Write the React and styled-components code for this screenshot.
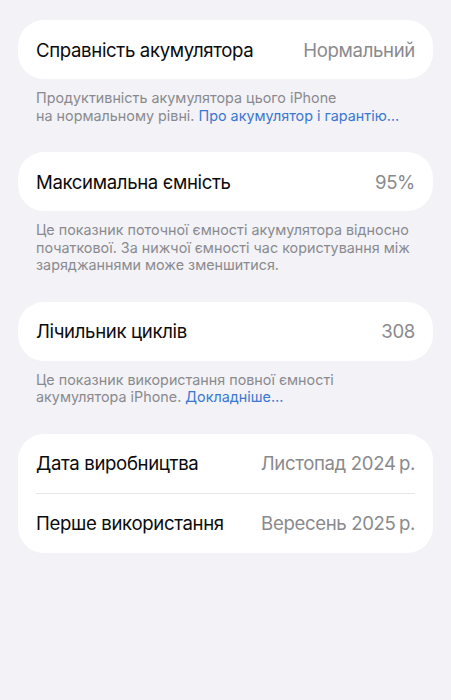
import styled, { createGlobalStyle } from "styled-components";

const GlobalStyle = createGlobalStyle`
    html, body {
        margin: 0;
        padding: 0;
        background: #f2f2f7;
    }
    body {
        font-family: Inter, "Noto Sans", "Liberation Sans", sans-serif;
        -webkit-font-smoothing: antialiased;
    }
`;

// сторінка налаштувань
const Page = styled.div`
    min-height: 700px;
    box-sizing: border-box;
    padding: 20px 18px;
    background: #f2f2f7;
`;

const Section = styled.section`
    margin-bottom: 28px;
`;

const Card = styled.div`
    background: #fff;
    border-radius: 26px;
    overflow: hidden;
`;

const Row = styled.div`
    display: flex;
    align-items: center;
    justify-content: space-between;
    height: 59px;
    padding: 0 18px;
`;

const Divider = styled.div`
    height: 1px;
    margin: 0 18px;
    background: #e6e6eb;
`;

const Label = styled.span`
    font-size: 18.6px;
    letter-spacing: -0.35px;
    color: #0b0b0c;
`;

const Value = styled.span`
    font-size: 18.6px;
    letter-spacing: -0.35px;
    color: #8a8a8e;
`;

const Footnote = styled.p`
    margin: 0;
    padding: 10px 18px 0;
    font-size: 14.35px;
    line-height: 17.5px;
    letter-spacing: 0;
    color: #8a8a8e;
    white-space: nowrap;
`;

const Link = styled.a`
    color: #3a78d1;
    text-decoration: none;
`;

function App() {
    return (
        <>
            <GlobalStyle />
            <Page>
                <Section>
                    <Card>
                        <Row>
                            <Label>Справність акумулятора</Label>
                            <Value>Нормальний</Value>
                        </Row>
                    </Card>
                    <Footnote>
                        Продуктивність акумулятора цього iPhone
                        <br />
                        на нормальному рівні. <Link>Про акумулятор і гарантію…</Link>
                    </Footnote>
                </Section>

                <Section>
                    <Card>
                        <Row>
                            <Label>Максимальна ємність</Label>
                            <Value>95%</Value>
                        </Row>
                    </Card>
                    <Footnote>
                        Це показник поточної ємності акумулятора відносно
                        <br />
                        початкової. За нижчої ємності час користування між
                        <br />
                        заряджаннями може зменшитися.
                    </Footnote>
                </Section>

                <Section>
                    <Card>
                        <Row>
                            <Label>Лічильник циклів</Label>
                            <Value>308</Value>
                        </Row>
                    </Card>
                    <Footnote>
                        Це показник використання повної ємності
                        <br />
                        акумулятора iPhone. <Link>Докладніше…</Link>
                    </Footnote>
                </Section>

                <Section>
                    <Card>
                        <Row>
                            <Label>Дата виробництва</Label>
                            <Value>Листопад 2024{"\u202f"}р.</Value>
                        </Row>
                        <Divider />
                        <Row>
                            <Label>Перше використання</Label>
                            <Value>Вересень 2025{"\u202f"}р.</Value>
                        </Row>
                    </Card>
                </Section>
            </Page>
        </>
    );
}

export default App;
